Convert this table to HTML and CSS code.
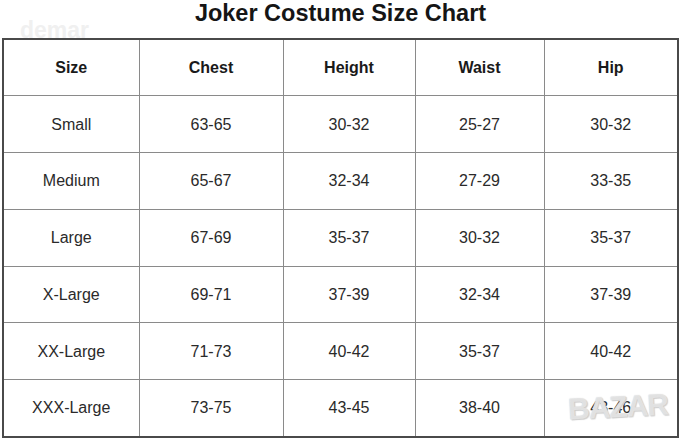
FILE: index.html
```html
<!DOCTYPE html>
<html lang="en">
<head>
<meta charset="utf-8">
<title>Joker Costume Size Chart</title>
<link rel="stylesheet" href="styles.css">
</head>
<body>
<div class="page">
  <h1 class="title">Joker Costume Size Chart</h1>
  <table class="chart">
    <colgroup>
      <col class="c1"><col class="c2"><col class="c3"><col class="c4"><col class="c5">
    </colgroup>
    <thead>
      <tr><th>Size</th><th>Chest</th><th>Height</th><th>Waist</th><th>Hip</th></tr>
    </thead>
    <tbody>
      <tr><td>Small</td><td>63-65</td><td>30-32</td><td>25-27</td><td>30-32</td></tr>
      <tr><td>Medium</td><td>65-67</td><td>32-34</td><td>27-29</td><td>33-35</td></tr>
      <tr><td>Large</td><td>67-69</td><td>35-37</td><td>30-32</td><td>35-37</td></tr>
      <tr><td>X-Large</td><td>69-71</td><td>37-39</td><td>32-34</td><td>37-39</td></tr>
      <tr><td>XX-Large</td><td>71-73</td><td>40-42</td><td>35-37</td><td>40-42</td></tr>
      <tr><td>XXX-Large</td><td>73-75</td><td>43-45</td><td>38-40</td><td>43-46</td></tr>
    </tbody>
  </table>
  <span class="wm wm-top">demar</span>
  <span class="wm wm-bottom">BAZAR</span>
</div>
</body>
</html>
```

FILE: styles.css
```css
* { box-sizing: border-box; }
html, body { margin: 0; padding: 0; background: #fff; }
body { font-family: "Liberation Sans", Arial, sans-serif; color: #222; }
.page { position: relative; width: 679px; height: 439px; padding: 0 0 0 2px; overflow: hidden; }
.title {
  margin: 0;
  height: 38px;
  padding-top: 1px;
  font-size: 23.5px;
  font-weight: bold;
  line-height: 24px;
  text-align: center;
  color: #151515;
}
.chart {
  border-collapse: collapse;
  table-layout: fixed;
  width: 675px;
  border: 2px solid #4a4a4a;
}
.c1 { width: 136px; }
.c2 { width: 144px; }
.c3 { width: 132px; }
.c4 { width: 129px; }
.c5 { width: 134px; }
.chart th, .chart td {
  border: 1px solid #8a8a8a;
  height: 56.8px;
  padding: 0;
  text-align: center;
  vertical-align: middle;
  font-size: 16px;
}
.chart th { font-weight: bold; color: #1a1a1a; }
.chart td { font-weight: normal; color: #2a2a2a; padding-top: 1px; }
.wm {
  position: absolute;
  font-weight: bold;
  pointer-events: none;
}
.wm-top {
  left: 20px;
  top: 17px;
  font-size: 23px;
  color: #f0f0f0;
}
.wm-bottom {
  left: 568px;
  top: 390px;
  font-size: 30px;
  letter-spacing: -1px;
  color: rgba(255,255,255,0.5);
  text-shadow: 0 0 1px #c4c4c4, 1px 1px 1px #d0d0d0;
  transform: rotate(-3deg);
}
```
